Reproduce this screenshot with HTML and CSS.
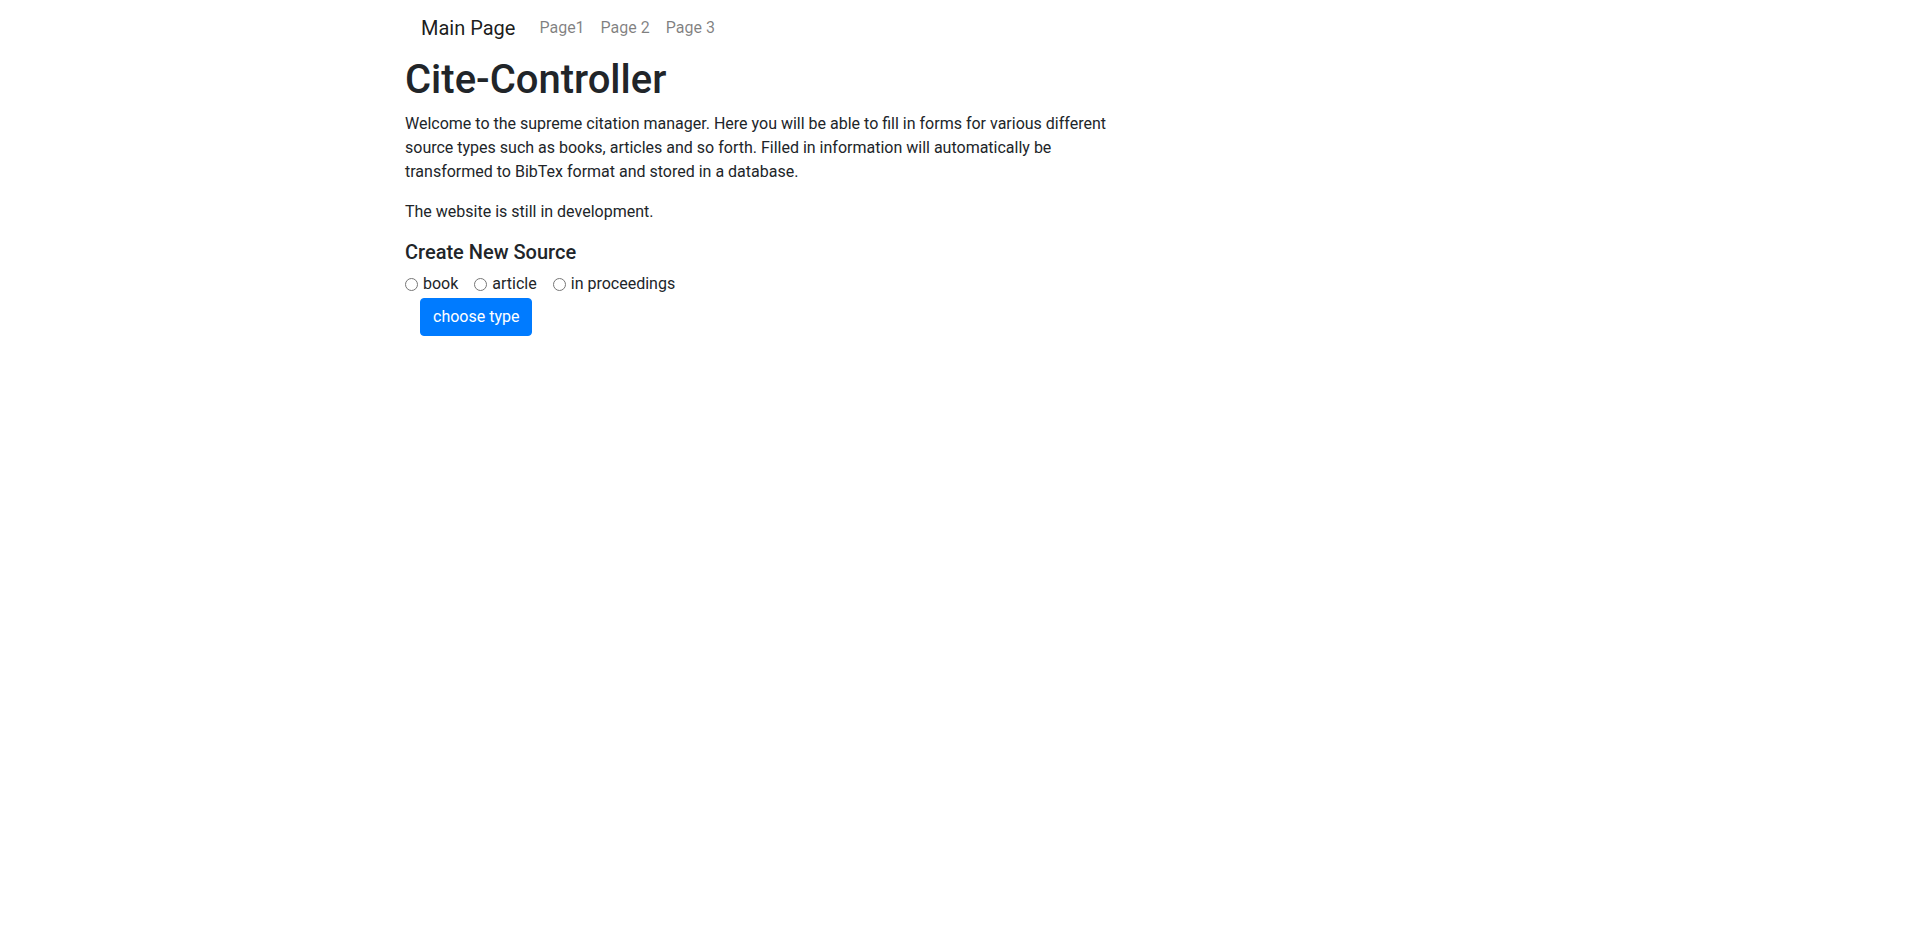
FILE: index.html
```html
<!DOCTYPE html>
<html lang="en">
<head>
<meta charset="utf-8">
<title>Cite-Controller</title>
<link rel="stylesheet" href="styles.css">
</head>
<body>
<div class="container">
  <nav class="navbar">
    <a class="brand" href="#">Main Page</a>
    <ul class="nav">
      <li><a class="nav-link" href="#">Page1</a></li>
      <li><a class="nav-link" href="#">Page 2</a></li>
      <li><a class="nav-link" href="#">Page 3</a></li>
    </ul>
  </nav>
  <main class="content">
    <h1 class="title">Cite-Controller</h1>
    <p>Welcome to the supreme citation manager. Here you will be able to fill in forms for various different source types such as books, articles and so forth. Filled in information will automatically be transformed to BibTex format and stored in a database.</p>
    <p>The website is still in development.</p>
    <h5 class="subtitle">Create New Source</h5>
    <form class="type-form">
      <div class="radios">
        <label class="radio-label"><input type="radio" name="type" value="book">book</label>
        <label class="radio-label"><input type="radio" name="type" value="article">article</label>
        <label class="radio-label"><input type="radio" name="type" value="inproceedings">in proceedings</label>
      </div>
      <div class="actions">
        <button type="button" class="btn-primary">choose type</button>
      </div>
    </form>
  </main>
</div>
</body>
</html>
```
FILE: styles.css
```css
* { box-sizing: border-box; }
html, body { margin: 0; padding: 0; }
body {
  font-family: Roboto, "Liberation Sans", Arial, sans-serif;
  font-size: 16px;
  line-height: 1.5;
  color: #212529;
  background: #fff;
}
.container {
  max-width: 1140px;
  margin: 0 auto;
  padding: 0 15px;
}
.navbar {
  display: flex;
  align-items: center;
  padding: 8px 16px;
}
.brand {
  font-size: 20px;
  line-height: 30px;
  padding: 5px 0;
  margin-right: 16px;
  color: rgba(0,0,0,.9);
  text-decoration: none;
}
.nav {
  display: flex;
  list-style: none;
  margin: 0;
  padding: 0;
}
.nav-link {
  display: block;
  padding: 8px 8px;
  color: rgba(0,0,0,.5);
  text-decoration: none;
}
.content { max-width: 730px; }
.title {
  font-size: 40px;
  font-weight: 500;
  line-height: 1.2;
  margin: 0 0 8px;
}
p { margin: 0 0 16px; }
.subtitle {
  font-size: 20px;
  font-weight: 500;
  line-height: 1.2;
  margin: 0 0 8px;
}
.radios {
  display: flex;
  align-items: center;
}
.radio-label {
  display: inline-flex;
  align-items: center;
  margin-right: 16px;
}
.radio-label input {
  margin: 0 5px 0 0;
  width: 13px;
  height: 13px;
}
.actions {
  padding: 2px 0 0 15px;
}
.btn-primary {
  font-family: inherit;
  font-size: 16px;
  line-height: 24px;
  padding: 6px 12px;
  color: #fff;
  background: #007bff;
  border: 1px solid #007bff;
  border-radius: 4px;
  cursor: pointer;
}
```
